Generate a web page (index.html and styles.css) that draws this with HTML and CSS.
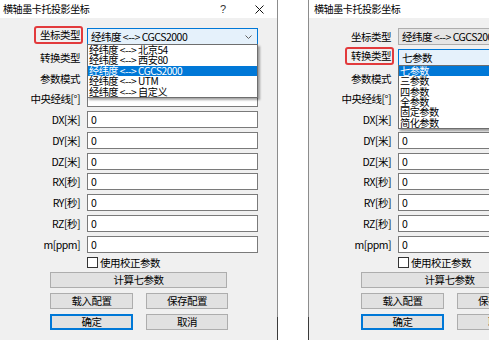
FILE: index.html
```html
<!DOCTYPE html>
<html lang="zh-CN">
<head>
<meta charset="utf-8">
<title>横轴墨卡托投影坐标</title>
<link rel="stylesheet" href="styles.css">
</head>
<body>
<div class="screen">
  <section class="dialog dialog-left">
    <header class="titlebar">
      <span class="title">横轴墨卡托投影坐标</span>
      <span class="tb-help">?</span>
      <span class="tb-close"><svg width="9" height="9" viewBox="0 0 9 9"><path d="M0.5 0.5L8.5 8.5M8.5 0.5L0.5 8.5" stroke="#111" stroke-width="1" fill="none"/></svg></span>
    </header>
    <div class="body">
      <div class="form">
        <div class="label label-marked"><span class="mark">坐标类型</span></div>
        <div class="combo combo-focus">
          <span class="combo-text">经纬度 &lt;--&gt; CGCS2000</span>
          <svg class="chev" width="7" height="4" viewBox="0 0 7 4"><polyline points="0.5,0.5 3.5,3.5 6.5,0.5" stroke="#606060" stroke-width="1" fill="none"/></svg>
          <ul class="dropdown">
            <li class="item">经纬度 &lt;--&gt; 北京54</li>
            <li class="item">经纬度 &lt;--&gt; 西安80</li>
            <li class="item item-active">经纬度 &lt;--&gt; CGCS2000</li>
            <li class="item">经纬度 &lt;--&gt; UTM</li>
            <li class="item">经纬度 &lt;--&gt; 自定义</li>
          </ul>
        </div>
        <div class="label">转换类型</div>
        <div class="combo"></div>
        <div class="label">参数模式</div>
        <div class="combo"></div>
        <div class="label">中央经线[°]</div>
        <div class="input"></div>
        <div class="label">DX[米]</div>
        <div class="input">0</div>
        <div class="label">DY[米]</div>
        <div class="input">0</div>
        <div class="label">DZ[米]</div>
        <div class="input">0</div>
        <div class="label">RX[秒]</div>
        <div class="input">0</div>
        <div class="label">RY[秒]</div>
        <div class="input">0</div>
        <div class="label">RZ[秒]</div>
        <div class="input">0</div>
        <div class="label">m[ppm]</div>
        <div class="input">0</div>
      </div>
      <div class="check-row"><span class="checkbox"></span><span class="check-text">使用校正参数</span></div>
      <div class="actions">
        <button class="btn btn-wide">计算七参数</button>
        <div class="btn-row">
          <button class="btn btn-a">载入配置</button>
          <button class="btn btn-b">保存配置</button>
        </div>
        <div class="btn-row">
          <button class="btn btn-a btn-default">确定</button>
          <button class="btn btn-b">取消</button>
        </div>
      </div>
    </div>
  </section>

  <section class="dialog dialog-right">
    <header class="titlebar">
      <span class="title">横轴墨卡托投影坐标</span>
      <span class="tb-help">?</span>
      <span class="tb-close"><svg width="9" height="9" viewBox="0 0 9 9"><path d="M0.5 0.5L8.5 8.5M8.5 0.5L0.5 8.5" stroke="#111" stroke-width="1" fill="none"/></svg></span>
    </header>
    <div class="body">
      <div class="form">
        <div class="label">坐标类型</div>
        <div class="combo"><span class="combo-text">经纬度 &lt;--&gt; CGCS2000</span></div>
        <div class="label label-marked"><span class="mark">转换类型</span></div>
        <div class="combo combo-focus">
          <span class="combo-text">七参数</span>
          <ul class="dropdown">
            <li class="item item-active">七参数</li>
            <li class="item">三参数</li>
            <li class="item">四参数</li>
            <li class="item">全参数</li>
            <li class="item">固定参数</li>
            <li class="item">简化参数</li>
          </ul>
        </div>
        <div class="label">参数模式</div>
        <div class="combo"></div>
        <div class="label">中央经线[°]</div>
        <div class="input"></div>
        <div class="label">DX[米]</div>
        <div class="input"></div>
        <div class="label">DY[米]</div>
        <div class="input">0</div>
        <div class="label">DZ[米]</div>
        <div class="input">0</div>
        <div class="label">RX[秒]</div>
        <div class="input">0</div>
        <div class="label">RY[秒]</div>
        <div class="input">0</div>
        <div class="label">RZ[秒]</div>
        <div class="input">0</div>
        <div class="label">m[ppm]</div>
        <div class="input">0</div>
      </div>
      <div class="check-row"><span class="checkbox"></span><span class="check-text">使用校正参数</span></div>
      <div class="actions">
        <button class="btn btn-wide">计算七参数</button>
        <div class="btn-row">
          <button class="btn btn-a">载入配置</button>
          <button class="btn btn-b">保存配置</button>
        </div>
        <div class="btn-row">
          <button class="btn btn-a btn-default">确定</button>
          <button class="btn btn-b">取消</button>
        </div>
      </div>
    </div>
  </section>
</div>
</body>
</html>
```

FILE: styles.css
```css
* {
  box-sizing: border-box;
  margin: 0;
  padding: 0;
}

html, body {
  width: 489px;
  height: 340px;
  overflow: hidden;
  background: #ffffff;
}

body {
  font-family: "Noto Sans CJK SC", "Liberation Sans", sans-serif;
  font-size: 10.5px;
  letter-spacing: -0.5px;
  color: #000;
}

.screen {
  display: flex;
  gap: 30px;
  margin-left: -2px;
  width: max-content;
  height: 340px;
}

.dialog {
  flex: none;
  width: 280px;
  height: 340px;
  background: #f0f0f0;
  display: flex;
  flex-direction: column;
}

.dialog-left {
  border-right: 1px solid #8c8c8c;
  border-image: linear-gradient(to bottom, #8c8c8c 0, #8c8c8c 93%, #3a3a3a 93%, #3a3a3a 100%) 1;
}

.dialog-right {
  border-left: 1px solid #8c8c8c;
  border-image: linear-gradient(to bottom, #8c8c8c 0, #8c8c8c 93%, #3a3a3a 93%, #3a3a3a 100%) 1;
}

.titlebar {
  height: 18px;
  background: #ffffff;
  display: flex;
  align-items: center;
  padding: 0 12px 0 5px;
  flex: none;
}

.title {
  flex: 1;
  font-size: 10px;
  line-height: 18px;
  letter-spacing: -0.4px;
  white-space: nowrap;
}

.tb-help {
  width: 10px;
  text-align: center;
  font-family: "Liberation Sans", sans-serif;
  font-size: 11px;
  color: #333;
  letter-spacing: 0;
}

.tb-close {
  width: 12px;
  margin-left: 25px;
  display: flex;
  justify-content: center;
}

.body {
  flex: 1;
  padding-top: 10px;
  display: flex;
  flex-direction: column;
}

.form {
  display: grid;
  grid-template-columns: 82px 171px;
  grid-auto-rows: 17px;
  column-gap: 7px;
  row-gap: 3.75px;
}

.label {
  display: flex;
  justify-content: flex-end;
  align-items: center;
  white-space: nowrap;
  line-height: 17px;
}

.label-marked {
  align-items: flex-start;
}

.mark {
  display: block;
  height: 18px;
  margin-top: -2px;
  margin-right: -3px;
  padding: 0 1px 0 4px;
  line-height: 14px;
  border: 2px solid #e23a3c;
  border-radius: 3px;
}

.combo {
  position: relative;
  height: 17px;
  border: 1px solid #adadad;
  background: #e5e5e5;
  display: flex;
  align-items: center;
  padding-left: 3px;
}

.combo-focus {
  border-color: #0078d7;
  background: #e5f1fb;
}

.combo-text {
  white-space: nowrap;
  line-height: 15px;
}

.chev {
  margin-left: auto;
  margin-right: 5px;
  flex: none;
}

.dropdown {
  position: absolute;
  left: -1px;
  top: 100%;
  width: calc(100% + 2px);
  list-style: none;
  background: #ffffff;
  border: 1px solid #6e6e6e;
  box-shadow: 2px 2px 2px rgba(0, 0, 0, 0.35);
  z-index: 10;
}

.item {
  height: 10.4px;
  line-height: 10.4px;
  font-size: 10.2px;
  padding-left: 1px;
  white-space: nowrap;
}

.item-active {
  background: #0078d7;
  color: #ffffff;
}

.input {
  height: 17px;
  background: #ffffff;
  border: 1px solid #7a7a7a;
  padding-left: 3px;
  display: flex;
  align-items: center;
  line-height: 15px;
}

.check-row {
  margin-top: 4px;
  height: 11px;
  padding-left: 89px;
  display: flex;
  align-items: center;
  gap: 2px;
}

.checkbox {
  width: 11px;
  height: 11px;
  background: #ffffff;
  border: 1px solid #333333;
  flex: none;
}

.check-text {
  line-height: 11px;
  white-space: nowrap;
}

.actions {
  margin-top: 4.5px;
  padding-left: 52px;
  display: flex;
  flex-direction: column;
  gap: 5px;
}

.btn-row {
  display: flex;
  gap: 13px;
}

.btn {
  height: 16px;
  background: #e1e1e1;
  border: 1px solid #adadad;
  font-family: inherit;
  font-size: 10.5px;
  letter-spacing: -0.5px;
  color: #000;
  line-height: 14px;
  text-align: center;
  padding: 0;
}

.btn-wide {
  width: 177px;
}

.btn-a {
  width: 83px;
}

.btn-b {
  width: 82px;
}

.btn-default {
  border-color: #0078d7;
  box-shadow: inset 0 0 0 1px #0078d7;
}
```
